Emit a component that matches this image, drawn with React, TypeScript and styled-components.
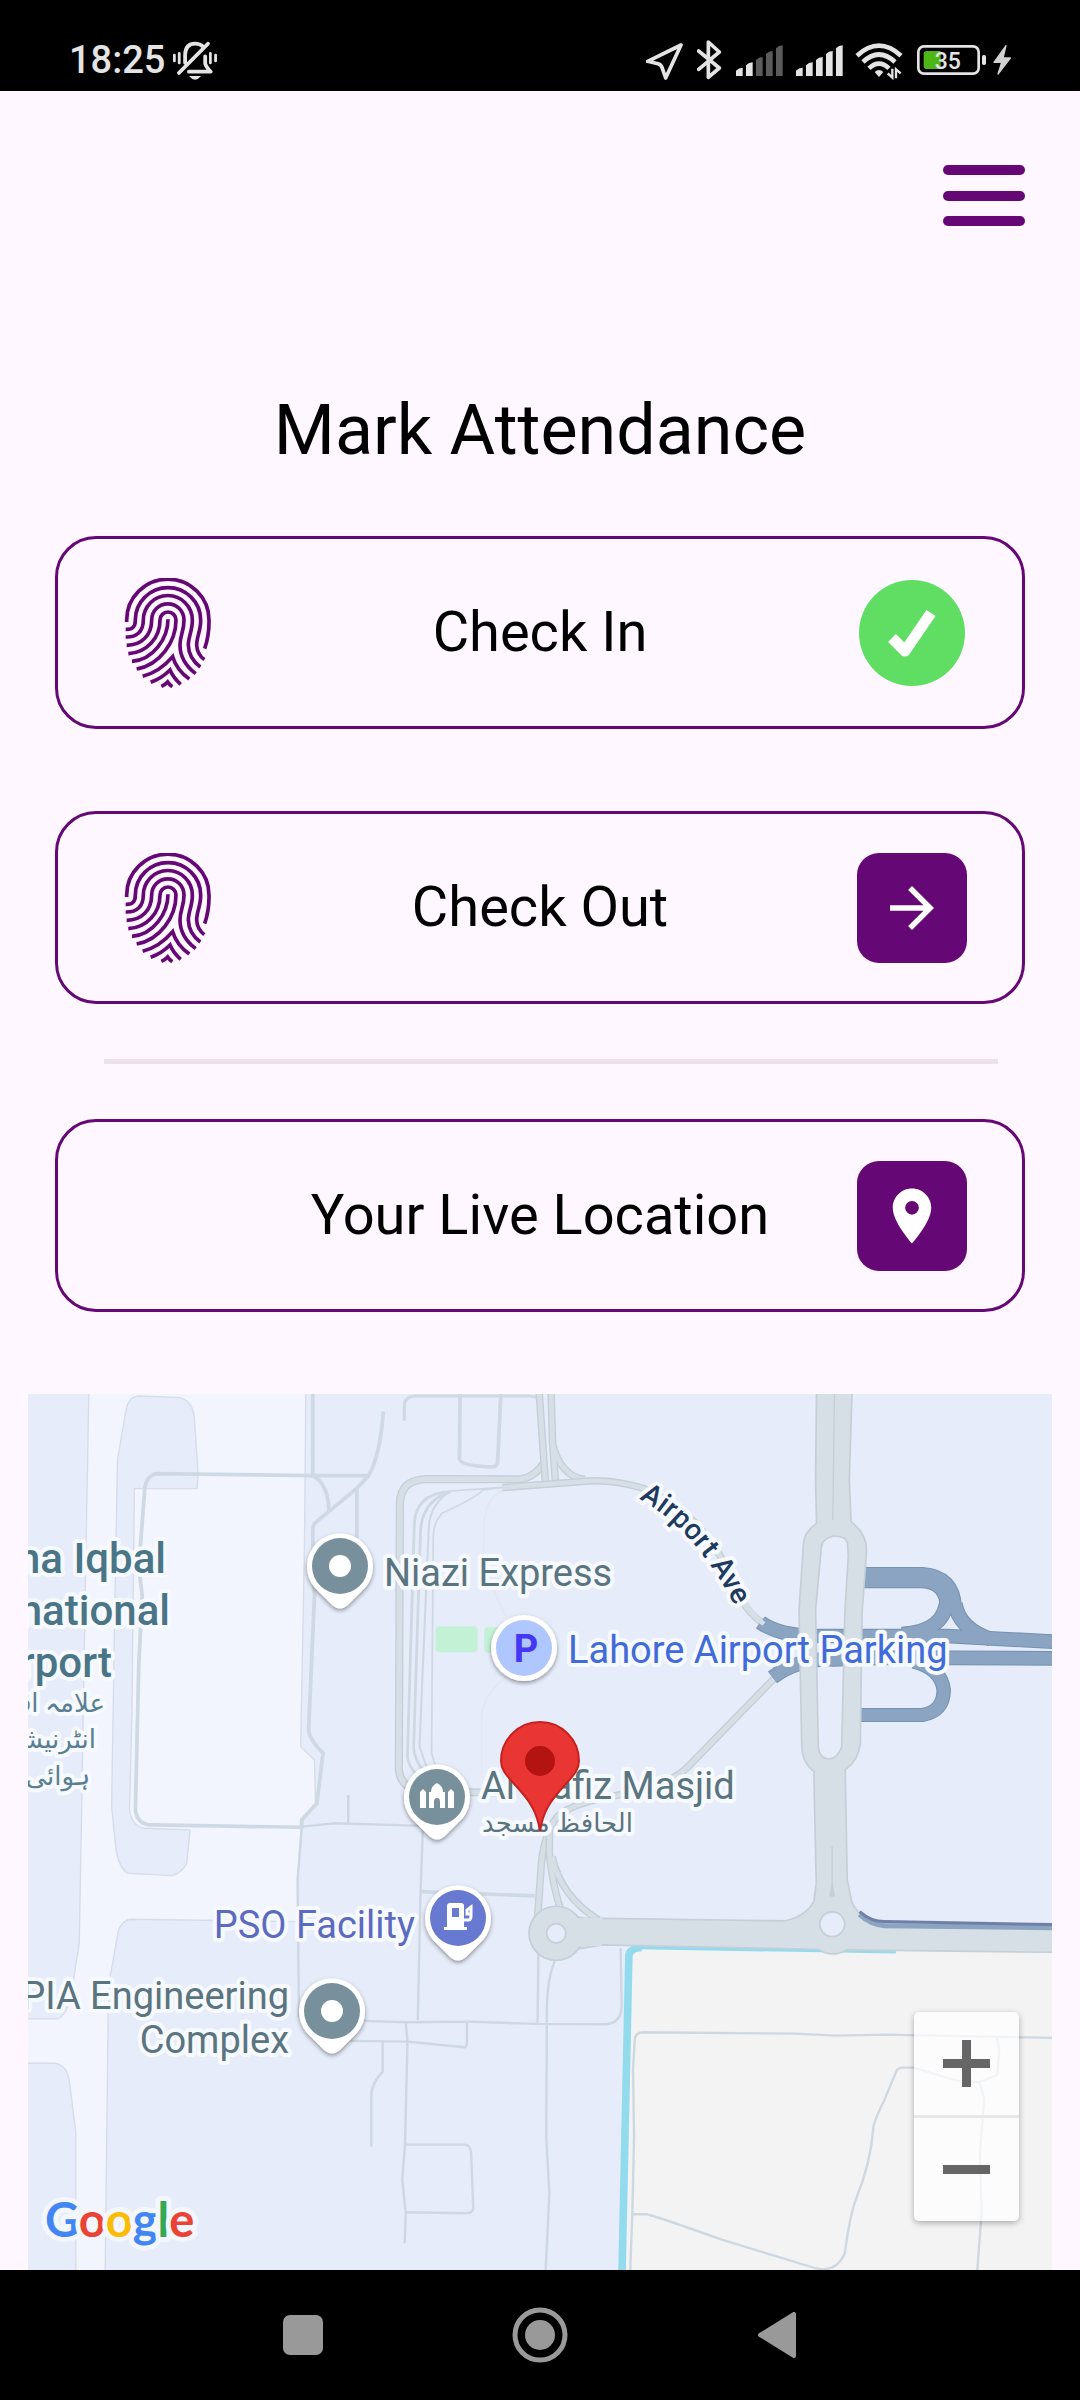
import React from 'react';
import styled, { createGlobalStyle } from 'styled-components';
import { MdArrowForward, MdLocationOn } from 'react-icons/md';

const purple = '#650775';
const surface = '#fef7ff';

const GlobalStyle = createGlobalStyle`
  * { box-sizing: border-box; }
  body { margin: 0; background: ${surface}; font-family: Roboto, sans-serif; color: #000; }
  button { font: inherit; color: inherit; cursor: pointer; }
`;

const Screen = styled.div`
  display: flex;
  flex-direction: column;
  min-height: 100vh;
`;

const StatusBar = styled.header`
  display: flex;
  align-items: center;
  justify-content: space-between;
  height: 91px;
  padding: 28px 69px 0 69px;
  background: #000;
  color: #e4e4e4;
`;

const StatusGroup = styled.div<{ $gap: number }>`
  display: flex;
  align-items: center;
  gap: ${(p) => p.$gap}px;
`;

const Clock = styled.time`
  font-size: 38px;
  font-weight: 500;
  line-height: 48px;
`;

const Glyph = styled.svg`
  display: block;
  flex: none;
  height: 48px;
`;

const Main = styled.main`
  display: flex;
  flex: 1;
  flex-direction: column;
  padding-top: 74px;
`;

const Content = styled.section`
  display: flex;
  flex-direction: column;
  padding: 0 55px;
`;

const MenuButton = styled.button`
  align-self: flex-end;
  padding: 0;
  border: 0;
  background: none;
  svg { display: block; }
`;

const Title = styled.h1`
  margin: 162px 0 65px;
  font-size: 70px;
  font-weight: 400;
  line-height: 82px;
  text-align: center;
`;

const Actions = styled.div`
  display: flex;
  flex-direction: column;
  gap: 82px;
`;

const ActionCard = styled.button`
  display: grid;
  grid-template-columns: 110px 1fr 110px;
  align-items: center;
  width: 100%;
  height: 193px;
  padding: 0 55px;
  border: 3px solid ${purple};
  border-radius: 41px;
  background: none;
`;

const ActionLabel = styled.span`
  grid-column: 2;
  padding-bottom: 2px;
  font-size: 56px;
  line-height: 66px;
  text-align: center;
  white-space: nowrap;
`;

const Badge = styled.span`
  display: flex;
  align-items: center;
  justify-content: center;
  height: 110px;
  border-radius: 22px;
  background: ${purple};
  color: #fff;
`;

const Divider = styled.hr`
  height: 5px;
  margin: 55px 27px 55px 49px;
  border: 0;
  background: #ede2ec;
`;

const MapPanel = styled.section`
  position: relative;
  margin: 82px 28px 0;
  overflow: hidden;
`;

const MapCanvas = styled.svg`
  display: block;
  width: 100%;
  height: 876px;
  background: #e6ecfa;
`;

const MapLabel = styled.text<{ $tone?: string; $size?: number; $weight?: number }>`
  font-family: Roboto, 'DejaVu Sans', sans-serif;
  font-size: ${(p) => p.$size ?? 38}px;
  font-weight: ${(p) => p.$weight ?? 400};
  fill: ${(p) => p.$tone ?? '#5a7480'};
  stroke: #f6f9fe;
  stroke-width: 8px;
  stroke-linejoin: round;
  paint-order: stroke;
`;

const Wordmark = styled.text`
  font-family: Lato, sans-serif;
  font-size: 47px;
  font-weight: 700;
  stroke: #f3f6fd;
  stroke-width: 10px;
  stroke-linejoin: round;
  paint-order: stroke;
`;

const ZoomControls = styled.div`
  position: absolute;
  right: 33px;
  bottom: 49px;
  display: flex;
  flex-direction: column;
  width: 105px;
  border-radius: 5px;
  background: rgba(255, 255, 255, 0.72);
  box-shadow: 0 2px 6px rgba(0, 0, 0, 0.3);
`;

const ZoomButton = styled.button`
  display: flex;
  align-items: center;
  justify-content: center;
  height: 103px;
  padding: 0;
  border: 0;
  background: none;
  & + & { height: 106px; border-top: 3px solid #e8e8e8; }
`;

const NavBar = styled.nav`
  display: flex;
  justify-content: center;
  background: #000;
`;

const NavButton = styled.button`
  display: flex;
  align-items: center;
  justify-content: center;
  width: 237px;
  height: 130px;
  padding: 0;
  border: 0;
  background: none;
`;

const Fingerprint = () => (
  <svg width="110" height="110" viewBox="9 54 330 330" fill="none" stroke={purple} strokeWidth="11" aria-hidden="true">
    <path d="M50 186V180A123 122 0 0 1 297 180Q298 225 284 266" />
    <path d="M47 208C68 209 76 200 76 180A98 97 0 0 1 272 180C273 210 260 230 260 255Q261 282 283 299" />
    <path d="M47 231C80 232 100 215 100 180A73 73 0 0 1 247 180C248 210 235 230 235 255Q236 295 271 321" />
    <path d="M50 256C95 256 125 225 125 180A48 48 0 0 1 222 180C222 215 210 225 210 255Q210 305 257 341" />
    <path d="M55 281C110 278 150 235 150 180A24 24 0 0 1 198 180C198 245 150 315 80 327" />
    <path d="M174 178C174 235 130 300 66 304" />
    <path d="M98 349Q150 335 188 290Q200 330 238 357" />
    <path d="M122 367Q155 355 180 330Q190 353 212 373" />
    <path d="M154 379Q166 374 173 366Q178 374 187 380" />
  </svg>
);

const CheckMark = () => (
  <svg width="110" height="110" viewBox="0 0 110 110" role="img" aria-label="Done">
    <circle cx="55" cy="55" r="53" fill="#60de63" />
    <path d="M35 60L48 73L74 35" fill="none" stroke="#fff" strokeWidth="11" strokeLinejoin="round" />
  </svg>
);

const signalTops = [200, 184, 168, 150, 133];

const Signal = ({ level }: { level: number }) => (
  <Glyph width="48" viewBox="405 105 144 144" aria-hidden="true">
    {signalTops.map((top, i) => {
      const x = 408 + i * 30;
      return (
        <path
          key={top}
          d={`M${x} 225V${top + 9}Q${x + 8} ${top} ${x + 20} ${top}V225Z`}
          fill={i < level ? '#e4e4e4' : '#5b5b5b'}
        />
      );
    })}
  </Glyph>
);

const StatusIcons = () => (
  <StatusGroup $gap={12}>
    <Glyph width="39" viewBox="138 105 117 144" fill="none" stroke="#e4e4e4" strokeWidth="11" strokeLinejoin="round">
      <path d="M243 132L143 181L174 188Q185 191 187 202L197 231Z" />
    </Glyph>
    <Glyph width="26" viewBox="291 105 78 144" fill="none" stroke="#e4e4e4" strokeWidth="11" strokeLinecap="round" strokeLinejoin="round">
      <path d="M296 150L358 201L325 229V123L358 153L296 205" />
    </Glyph>
    <Signal level={2} />
    <Signal level={5} />
    <Glyph width="48" viewBox="765 105 144 144" fill="none" stroke="#e4e4e4" strokeWidth="14">
      <path d="M771 164Q837 104 903 164M789 183Q837 138 885 183M807 202Q837 174 867 202" />
      <path d="M824 213Q837 201 850 213L837 228Z" fill="#e4e4e4" stroke="none" />
      <path d="M877 203V230L863 217M888 232V205L902 217" strokeWidth="7" />
    </Glyph>
    <Glyph width="96" viewBox="945 105 288 144">
      <rect x="955" y="136" width="181" height="82" rx="17" fill="none" stroke="#e4e4e4" strokeWidth="8" />
      <rect x="1146" y="162" width="12" height="30" rx="5" fill="#e4e4e4" />
      <path d="M981 150H1022V204H981Q971 204 971 194V160Q971 150 981 150Z" fill="#4db616" />
      <text x="1004" y="204" fontFamily="Roboto, sans-serif" fontSize="69" fontWeight="500" fill="#e4e4e4">35</text>
      <path d="M1218 134L1182 184L1205 184L1194 219L1231 171L1209 171Z" fill="#d2d2d2" stroke="#d2d2d2" strokeWidth="4" strokeLinejoin="round" />
    </Glyph>
  </StatusGroup>
);

const MutedBell = () => (
  <Glyph width="45" viewBox="497 105 130 144" preserveAspectRatio="none" fill="none" stroke="#e4e4e4" strokeWidth="11" strokeLinecap="round">
    <path d="M532 186V162Q533 128 561 128Q575 128 584 137M514 216L598 128" />
    <path d="M590 166V188Q593 198 606 212H543" strokeLinejoin="round" />
    <path d="M543 225H578Q561 247 543 225Z" fill="#e4e4e4" stroke="none" />
    <path d="M501 162V180M515 157V186M605 157V186M620 162V180" strokeWidth="8" />
  </Glyph>
);

const Pin = ({ x, y, color, children }: { x: number; y: number; color: string; children?: React.ReactNode }) => (
  <g transform={`translate(${x} ${y})`}>
    <path
      d="M-8 39L-25 22A33 33 0 1 1 25 22L8 39Q0 46 -8 39Z"
      fill="#fff"
      filter="url(#pinShadow)"
    />
    <circle r="28" fill={color} />
    {children ?? <circle r="11" fill="#fff" />}
  </g>
);

const Cased = ({ d, width = 18 }: { d: string; width?: number }) => (
  <>
    <path d={d} stroke="#c5cfd7" strokeWidth={width + 6} />
    <path d={d} stroke="#d7dfe6" strokeWidth={width - 2} />
  </>
);

const BlueRoads = () => {
  const roads: [string, number][] = [
    ['M940 593H1110Q1190 598 1193 682', 58],
    ['M1182 650Q1180 755 1050 762', 38],
    ['M1205 670Q1215 745 1310 778', 38],
    ['M930 1005H1110Q1172 995 1172 930Q1165 865 1085 845', 36],
    ['M640 727Q690 765 790 768L1180 768L1489 785', 38],
    ['M675 892Q750 835 850 838L1000 833L1489 835', 38],
  ];
  return (
    <g fill="none">
      {roads.map(([d, w]) => <path key={d} d={d} stroke="#7492b3" strokeWidth={w + 6} />)}
      {roads.map(([d, w]) => <path key={d} d={d} stroke="#8aa4c1" strokeWidth={w} />)}
    </g>
  );
};

const Streets = () => (
  <g transform="translate(20 1380) scale(.3444 .3333)" fill="none" strokeLinejoin="round">
    <g stroke="#d5dcea" strokeWidth="4">
      <path
        fill="#f3f5fe"
        d="M200 30L190 600L178 1350L172 1690L155 1800L138 1880Q125 1917 105 1917H10V2050H100Q135 2055 143 2100L162 2260V2700H247L256 1900L262 1790L286 1650Q300 1620 320 1618L806 1625L806 1500L818 1325L858 1270L855 1140L815 1100L826 500L830 30Z"
      />
      <path
        fill="#e6ecfa"
        d="M283 240L308 90Q315 50 345 48L460 52Q500 60 506 110L517 280L514 326H332L325 1000L318 1290Q325 1340 360 1345L494 1350L484 1450Q470 1480 440 1487L312 1480Q285 1460 278 1400L266 1280L275 700Z"
      />
    </g>
    <g fill="#c3f1d5">
      <rect x="1207" y="739" width="122" height="78" rx="12" />
      <rect x="1348" y="742" width="80" height="76" rx="12" />
    </g>
    <g stroke="#e3e7f0" strokeWidth="4">
      <path d="M1400 330Q1350 360 1348 430L1345 560L1410 710M1400 900Q1345 950 1340 1010V1180" />
    </g>

    <g stroke="#cfd9e3" strokeWidth="11">
      <path d="M1012 287H850L400 281Q365 285 362 330L345 560L355 650L345 850L335 1290Q340 1335 385 1335L820 1342" />
      <path d="M850 30V287Q895 310 897 395M978 325V480" />
      <path d="M1055 95Q1045 230 1012 287L978 325L855 430Q849 440 850 470L855 650L838 1050Q840 1080 880 1120L862 1270L818 1320V1345" />
      <path d="M1116 122V75Q1118 50 1145 48L1480 48L1500 52" strokeWidth="9" />
      <path d="M1278 30L1276 235Q1276 258 1370 261Q1388 261 1387 240L1397 30" />
      <path d="M1163 1535L1495 1548" />
    </g>
    <g stroke="#ced8e2" strokeWidth="7">
      <path d="M820 1340L910 1330L1170 1338L1163 1535L1155 1920M953 1245V1335M818 1345L806 1500L810 1915" />
      <path d="M1000 1923L1120 1927L1300 1925L1500 1932L1700 1933Q1745 1930 1747 1880L1744 1705" />
      <path d="M1120 1927L1125 1985L1118 2290L1110 2400L1120 2500L1117 2590M960 1983L1125 1985L1290 2002Q1298 2002 1298 1985V1927" />
      <path d="M1053 1985V2075Q1020 2110 1020 2150V2300M1118 2294H1290Q1308 2294 1310 2320L1316 2485Q1314 2500 1295 2500L1120 2497" />
      <path d="M1505 1720L1503 1932M1555 1735Q1530 1800 1530 1880L1528 2270L1537 2440L1525 2700" />
    </g>
    <g stroke="#cdd8e1" strokeWidth="8">
      <path d="M1250 335Q1150 340 1145 430L1125 1130Q1130 1180 1190 1210" />
      <path d="M1250 335Q1170 360 1163 450L1143 1100Q1145 1150 1190 1190" />
      <path d="M1240 340Q1190 380 1187 440L1160 1100L1180 1160" strokeWidth="6" />
      <path d="M1250 333L1400 322L1345 330Q1320 355 1225 400Q1200 430 1200 470L1195 1120L1210 1170" strokeWidth="5" />
    </g>
    <Cased d="M1520 250Q1490 298 1440 298L1180 297Q1105 300 1103 370L1100 1170Q1105 1220 1160 1237H1400" width={18} />
    <Cased d="M1507 30L1526 315M1542 30L1546 180L1555 312M1546 190Q1570 290 1640 298" width={16} />
    <Cased d="M1400 323L1650 303Q1720 298 1810 325Q1960 390 2040 540L2100 665Q2115 700 2160 732" width={16} />
    <Cased d="M2195 890L1940 1160Q1890 1215 1740 1245Q1600 1270 1560 1310Q1522 1360 1514 1450L1503 1610" width={16} />
    <Cased d="M1537 1350V1420Q1545 1510 1570 1590M1545 1430Q1570 1550 1680 1620" width={16} />

    <g transform="translate(1510 0)">
      <g transform="translate(0 1320)">
        <path d="M250 1400L268 400Q275 383 290 383L1489 396V1400Z" fill="#f4f3f4" />
        <path d="M237 1400L258 405Q262 385 295 383" stroke="#92dbec" strokeWidth="22" />
        <path d="M280 383L1033 396" stroke="#92dbec" strokeWidth="10" />
        <g stroke="#ced8e1" strokeWidth="7">
          <path d="M260 1400L268 1180L273 950L270 750L275 660Q275 638 300 637L740 641L860 647L1000 644L1489 654" />
          <path d="M270 1183H310Q340 1190 530 1260L800 1345Q860 1360 885 1300Q900 1180 920 1130Q960 1030 968 920Q975 890 1000 840L1034 755Q1038 744 1050 743H1085L1210 782L1275 787L1328 765L1333 690L1326 650" />
          <path d="M1275 787L1290 835L1277 1000L1282 1180L1266 1400" />
        </g>
      </g>
      <BlueRoads />
      <path d="M650 732Q615 705 595 665" stroke="#d7dfe6" strokeWidth="14" />
      <path
        d="M80 1600Q120 1620 170 1615L710 1623Q770 1610 795 1565L802 1510L795 1175Q760 1145 760 1100L752 690L765 490Q768 455 803 430L800 300L803 30H906L898 300L903 425Q948 460 948 510L935 700L930 1090Q925 1140 886 1170L892 1500L905 1565Q930 1625 1000 1633L1500 1640V1717L890 1710Q848 1735 808 1708L180 1695L80 1712ZM852 468Q820 475 817 500L800 690L808 1100Q810 1135 838 1137Q865 1135 876 1100L885 700L895 530L893 490Q890 468 852 468ZM848 1596A36 37 0 1 0 849 1596Z"
        fill="#d7dfe6"
        fillRule="evenodd"
        stroke="#c5cfd7"
        strokeWidth="5"
      />
      <path d="M855 30L850 420M848 1400V1550" stroke="#c5cfd7" strokeWidth="4" />
      <path d="M840 1550L848 1500L857 1550Z" fill="#c5cfd7" />
      <ellipse cx="47" cy="1660" rx="79" ry="81" fill="#d7dfe6" stroke="#c5cfd7" strokeWidth="5" />
      <path d="M90 1614H180V1698H100Z" fill="#d7dfe6" />
      <ellipse cx="47" cy="1660" rx="28" ry="29" fill="#e6ecfa" stroke="#c5cfd7" strokeWidth="5" />
      <path d="M928 1603Q960 1633 1000 1637L1500 1643" stroke="#8aa4c1" strokeWidth="16" />
      <path d="M928 1595Q960 1625 1000 1625L1500 1634" stroke="#6f7fa6" strokeWidth="9" />
    </g>
  </g>
);

const urdu = { direction: 'rtl' as const, $size: 26, $tone: '#5a7f92' };

const LiveMap = () => (
  <MapCanvas viewBox="28 1394 1024 876" preserveAspectRatio="xMidYMid slice" aria-label="Map of your live location">
    <defs>
      <filter id="pinShadow" x="-30%" y="-30%" width="160%" height="160%">
        <feDropShadow dx="0" dy="2" stdDeviation="2" floodOpacity=".4" />
      </filter>
      <path id="airportAve" d="M639 1499Q697 1530 739 1614" />
    </defs>
    <Streets />

    <MapLabel x="166" y="1573" textAnchor="end" $size={42} $weight={500} $tone="#4a7586">ma Iqbal</MapLabel>
    <MapLabel x="170" y="1625" textAnchor="end" $size={42} $weight={500} $tone="#4a7586">national</MapLabel>
    <MapLabel x="112" y="1677" textAnchor="end" $size={42} $weight={500} $tone="#4a7586">rport</MapLabel>
    <MapLabel x="105" y="1712" {...urdu}>علامہ اقبال</MapLabel>
    <MapLabel x="96" y="1748" {...urdu}>انٹرنیشنل</MapLabel>
    <MapLabel x="90" y="1785" {...urdu}>ہوائی</MapLabel>

    <MapLabel x="384" y="1586">Niazi Express</MapLabel>
    <MapLabel x="568" y="1663" $tone="#416bd9">Lahore Airport Parking</MapLabel>
    <MapLabel x="481" y="1799">Al Hafiz Masjid</MapLabel>
    <MapLabel x="633" y="1832" {...urdu} $tone="#5a7480">الحافظ مسجد</MapLabel>
    <MapLabel x="415" y="1938" textAnchor="end" $tone="#5c6bc0">PSO Facility</MapLabel>
    <MapLabel x="289" y="2009" textAnchor="end">PIA Engineering</MapLabel>
    <MapLabel x="289" y="2053" textAnchor="end">Complex</MapLabel>
    <MapLabel $size={29} $weight={500} $tone="#1e3a5f">
      <textPath href="#airportAve">Airport Ave</textPath>
    </MapLabel>

    <Pin x={340} y={1566} color="#78909c" />
    <Pin x={332} y={2011} color="#78909c" />
    <Pin x={437} y={1797} color="#78909c">
      <path d="M-17 11V-5L-14 -8L-11 -5V11ZM11 11V-5L14 -8L17 -5V11ZM-8 11V-5H-6Q-6 -11 0 -14Q6 -11 6 -5H8V11H3V5Q3 1 0 1Q-3 1 -3 5V11Z" fill="#fff" />
    </Pin>
    <Pin x={458} y={1918} color="#6879d2">
      <path d="M-11 -12Q-11 -15 -8 -15H3Q6 -15 6 -12V9H9V12H-14V9H-11ZM-6 -10V-1H1V-10Z" fill="#fff" fillRule="evenodd" />
      <path d="M5 2H10Q13 2 13 -2V-11L9 -8V-4H13" fill="none" stroke="#fff" strokeWidth="3" />
    </Pin>
    <circle cx="524" cy="1648" r="33" fill="#fff" filter="url(#pinShadow)" />
    <circle cx="524" cy="1648" r="28" fill="#b0c6ff" />
    <text x="526" y="1662" textAnchor="middle" fontFamily="Roboto, sans-serif" fontSize="38" fontWeight="700" fill="#4438f5">P</text>

    <path
      d="M540 1831C537 1812 530 1801 516 1786C505 1774 501 1769 501 1761A39 39 0 0 1 579 1761C579 1769 575 1774 564 1786C550 1801 543 1812 540 1831Z"
      fill="#ea3535"
      stroke="#c5221f"
      strokeWidth="2"
    />
    <circle cx="540" cy="1761" r="15" fill="#b31412" />

    <Wordmark x="45" y="2237">
      <tspan fill="#4285f4">G</tspan>
      <tspan fill="#ea4335">o</tspan>
      <tspan fill="#fbbc05">o</tspan>
      <tspan fill="#4285f4">g</tspan>
      <tspan fill="#34a853">l</tspan>
      <tspan fill="#ea4335">e</tspan>
    </Wordmark>
  </MapCanvas>
);

export default function App() {
  return (
    <Screen>
      <GlobalStyle />
      <StatusBar>
        <StatusGroup $gap={8}>
          <Clock>18:25</Clock>
          <MutedBell />
        </StatusGroup>
        <StatusIcons />
      </StatusBar>

      <Main>
        <Content>
          <MenuButton aria-label="Open menu">
            <svg width="82" height="62" viewBox="0 0 82 62" fill={purple}>
              <rect width="82" height="10" rx="5" />
              <rect y="26" width="82" height="10" rx="5" />
              <rect y="51" width="82" height="10" rx="5" />
            </svg>
          </MenuButton>
          <Title>Mark Attendance</Title>
          <Actions>
            <ActionCard>
              <Fingerprint />
              <ActionLabel>Check In</ActionLabel>
              <CheckMark />
            </ActionCard>
            <ActionCard>
              <Fingerprint />
              <ActionLabel>Check Out</ActionLabel>
              <Badge><MdArrowForward size={66} /></Badge>
            </ActionCard>
          </Actions>
          <Divider />
          <ActionCard>
            <ActionLabel>Your Live Location</ActionLabel>
            <Badge><MdLocationOn size={66} /></Badge>
          </ActionCard>
        </Content>

        <MapPanel>
          <LiveMap />
          <ZoomControls>
            <ZoomButton aria-label="Zoom in">
              <svg width="47" height="47" viewBox="0 0 47 47" fill="#666"><path d="M19 0H28V19H47V28H28V47H19V28H0V19H19Z" /></svg>
            </ZoomButton>
            <ZoomButton aria-label="Zoom out">
              <svg width="47" height="9" viewBox="0 0 47 9" fill="#666"><path d="M0 0H47V9H0Z" /></svg>
            </ZoomButton>
          </ZoomControls>
        </MapPanel>
      </Main>

      <NavBar>
        <NavButton aria-label="Recent apps">
          <svg width="40" height="40" fill="#999"><rect width="40" height="40" rx="7" /></svg>
        </NavButton>
        <NavButton aria-label="Home">
          <svg width="56" height="56" viewBox="0 0 56 56">
            <circle cx="28" cy="28" r="25" fill="none" stroke="#999" strokeWidth="5" />
            <circle cx="28" cy="28" r="15" fill="#999" />
          </svg>
        </NavButton>
        <NavButton aria-label="Back">
          <svg width="38" height="46" viewBox="0 0 38 46" fill="#999" stroke="#999" strokeWidth="4" strokeLinejoin="round">
            <path d="M2 23L36 2V44Z" />
          </svg>
        </NavButton>
      </NavBar>
    </Screen>
  );
}
